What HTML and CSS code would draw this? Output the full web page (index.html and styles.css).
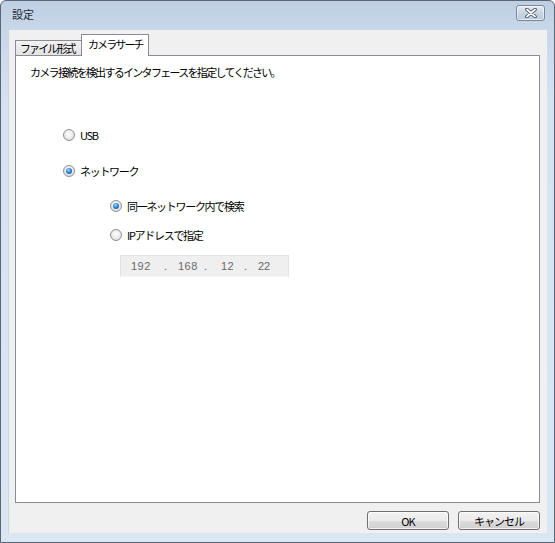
FILE: index.html
```html
<!DOCTYPE html>
<html lang="ja">
<head>
<meta charset="utf-8">
<link rel="stylesheet" href="styles.css">
</head>
<body>
<div class="window">
  <div class="titlebar">
    <span class="title">設定</span>
    <div class="close">
      <svg width="16" height="10" viewBox="0 0 16 10">
        <path d="M4 1.5 L12 8.5 M12 1.5 L4 8.5" stroke="#3d4a5c" stroke-width="3.6" stroke-linecap="round"/>
        <path d="M4 1.5 L12 8.5 M12 1.5 L4 8.5" stroke="#ffffff" stroke-width="1.8" stroke-linecap="round"/>
      </svg>
    </div>
  </div>
  <div class="client">
    <div class="tabs">
      <div class="tab">ファイル形式</div>
      <div class="tab active">カメラサーチ</div>
    </div>
    <div class="panel">
      <p class="intro">カメラ接続を検出するインタフェースを指定してください。</p>
      <div class="options">
        <label class="radio"><span class="dot"></span><span class="lbl">USB</span></label>
        <label class="radio"><span class="dot on"></span><span class="lbl">ネットワーク</span></label>
        <div class="sub">
          <label class="radio"><span class="dot on"></span><span class="lbl">同一ネットワーク内で検索</span></label>
          <label class="radio"><span class="dot"></span><span class="lbl">IPアドレスで指定</span></label>
          <div class="ipbox">
            <span class="o1">192</span><span class="s">.</span><span class="o2">168</span><span class="s s2">.</span><span class="o3">12</span><span class="s">.</span><span>22</span>
          </div>
        </div>
      </div>
    </div>
    <div class="buttons">
      <button class="btn">OK</button>
      <button class="btn">キャンセル</button>
    </div>
  </div>
</div>
</body>
</html>
```
FILE: styles.css
```css
* { box-sizing: border-box; }
html, body { margin: 0; padding: 0; }
body {
  width: 555px; height: 543px; overflow: hidden;
  font-family: "Noto Sans CJK JP", "Noto Sans", sans-serif;
  font-size: 11px;
  color: #000;
  background: #fff;
}
.window {
  width: 555px; height: 543px;
  border: 1px solid #5a6675;
  border-radius: 6px 6px 0 0;
  background: linear-gradient(to bottom, #bfcfe3 0px, #c8d7e9 30px, #d6e2f0 100px, #dbe6f3 543px);
  padding: 0 7px 9px 7px;
  display: flex; flex-direction: column;
}
.titlebar {
  height: 29px;
  display: flex; align-items: center; justify-content: space-between;
  padding-left: 4px;
}
.title {
  font-size: 11px; color: #1e2a38; margin-top: -4px;
}
.close {
  width: 29px; height: 16px;
  margin-top: -5px; margin-right: 2px;
  border: 1px solid #7a8798;
  border-radius: 3px;
  background: linear-gradient(to bottom, #e4ebf3, #c8d4e2 50%, #bccadb);
  display: flex; align-items: center; justify-content: center;
  box-shadow: inset 0 0 0 1px rgba(255,255,255,0.6);
}
.client {
  flex: 1;
  background: #f0f0f0;
  border-left: 1px solid #c9d5e3;
  padding: 4px 7px 0 6px;
  display: flex; flex-direction: column;
}
.tabs {
  display: flex; align-items: flex-end;
  height: 21px;
  position: relative; z-index: 2;
}
.tab {
  height: 15px;
  width: 67px;
  padding: 0 0 0 4px;
  border: 1px solid #898c95;
  border-bottom: none;
  background: linear-gradient(to bottom, #f2f2f2, #e3e3e3);
  font-size: 11px; line-height: 14px;
  letter-spacing: -1.9px;
  white-space: nowrap;
}
.tab.active {
  height: 22px;
  width: 68px;
  background: #fff;
  margin-left: -1px;
  padding: 2px 0 0 6px;
  margin-bottom: -1px;
}
.panel {
  height: 448px;
  width: 525px;
  background: #fff;
  border: 1px solid #898c95;
  padding: 9px 0 0 14px;
}
.intro {
  margin: 0;
  font-size: 11px;
  letter-spacing: -1.7px;
  line-height: 14px;
}
.options {
  padding: 49px 0 0 33px;
  display: flex; flex-direction: column;
}
.radio {
  display: flex; align-items: center;
  height: 14px;
  margin-bottom: 22px;
}
.lbl {
  font-size: 11px;
  letter-spacing: -1.3px;
  margin-left: 5px;
  line-height: 14px;
}
.dot {
  width: 12px; height: 12px;
  border-radius: 50%;
  border: 1px solid #8e8f8f;
  background: radial-gradient(circle at 50% 40%, #ffffff 0%, #e9e9e9 55%, #cfcfcf 100%);
  display: flex; align-items: center; justify-content: center;
}
.dot.on::after {
  content: "";
  width: 6px; height: 6px; border-radius: 50%;
  background: radial-gradient(circle at 40% 35%, #9bdcff 0%, #2d8ad8 45%, #0b3d8c 100%);
}
.sub {
  padding-left: 47px;
  margin-top: -1px;
  display: flex; flex-direction: column;
}
.sub .radio { margin-bottom: 15px; }
.ipbox {
  margin-left: 10px; margin-top: -2px;
  width: 169px; height: 22px;
  background: #efefef;
  border: 1px solid #e2e2e2;
  border-bottom-color: #f7f7f7;
  display: flex; align-items: center;
  padding-left: 10px;
  font-family: "Liberation Sans", sans-serif;
  font-size: 11px;
  color: #6a6a6a;
}
.ipbox span { display: inline-block; }
.o1 { width: 33px; letter-spacing: 0.5px; }
.o2 { width: 26px; letter-spacing: 0.5px; }
.o3 { width: 23px; letter-spacing: 0.5px; }
.s { width: 14px; }
.s2 { width: 17px; }
.buttons {
  display: flex; justify-content: flex-end;
  gap: 9px;
  padding-top: 8px;
}
.btn {
  width: 82px; height: 19px;
  border: 1px solid #707070;
  border-radius: 3px;
  background: linear-gradient(to bottom, #f2f2f2 0%, #ebebeb 50%, #dddddd 51%, #cfcfcf 100%);
  box-shadow: inset 0 0 0 1px rgba(255,255,255,0.7);
  font-family: "Noto Sans CJK JP", sans-serif;
  font-size: 11px; line-height: 14px;
  letter-spacing: -1px;
  padding: 0;
  color: #000;
}
```
